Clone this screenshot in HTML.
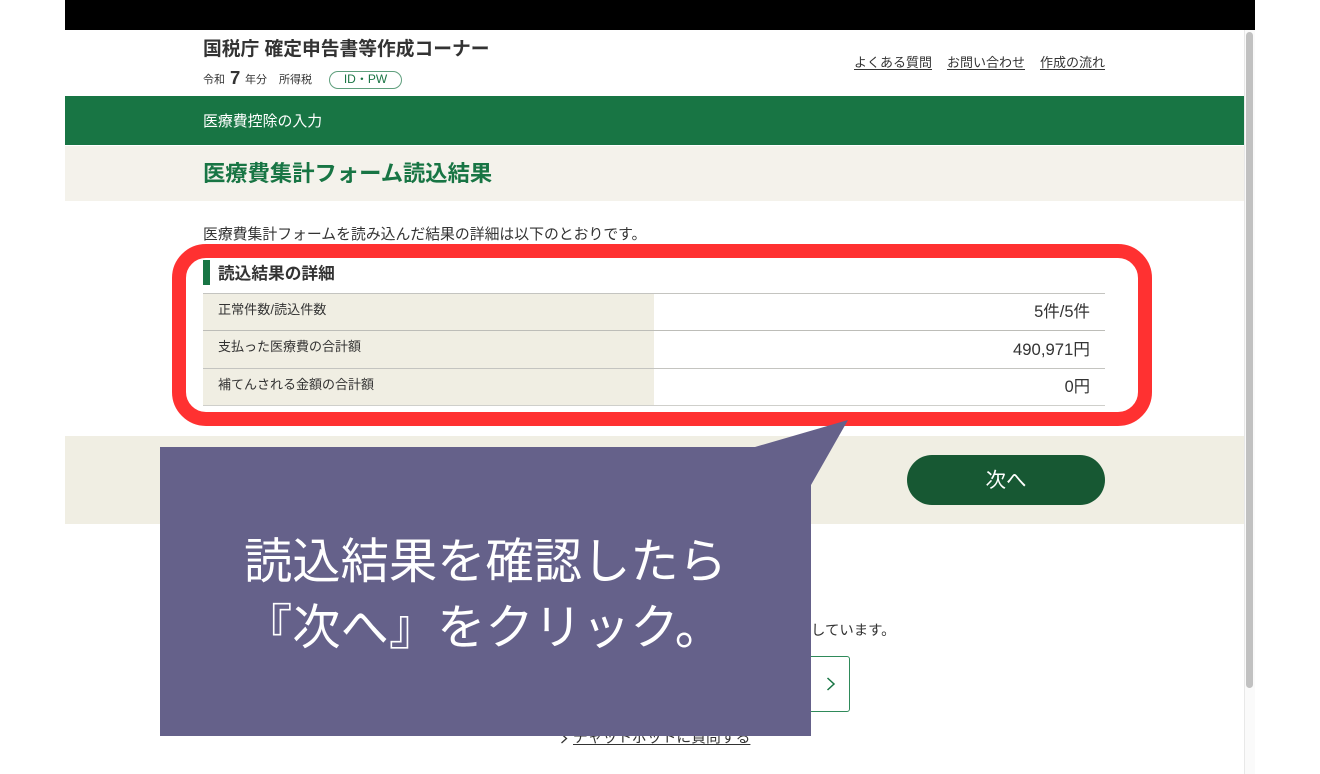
<!DOCTYPE html>
<html lang="ja">
<head>
<meta charset="utf-8">
<title>医療費集計フォーム読込結果</title>
<style>
html,body{margin:0;padding:0;background:#fff;}
body{width:1320px;height:774px;overflow:hidden;position:relative;font-family:"Liberation Sans","Noto Sans CJK JP",sans-serif;color:#333;}
.a{position:absolute;white-space:nowrap;}
u{text-underline-offset:2px;}
</style>
</head>
<body>
<div class="a" style="left:65px;top:0;width:1190px;height:30px;background:#000;"></div>
<div class="a" style="left:1244px;top:30px;width:11px;height:744px;background:#fafafa;border-left:1px solid #e8e8e8;box-sizing:border-box;"></div>
<div class="a" style="left:1246px;top:32px;width:7px;height:656px;background:#c1c1c1;border-radius:4px;"></div>

<div class="a" style="left:203px;top:37px;font-size:18.75px;line-height:24px;font-weight:700;">国税庁 確定申告書等作成コーナー</div>
<div class="a" style="left:203px;top:72px;font-size:11px;line-height:16px;">令和</div>
<div class="a" style="left:230px;top:67px;font-size:18.5px;line-height:22px;font-weight:700;">7</div>
<div class="a" style="left:245px;top:72px;font-size:11px;line-height:16px;">年分</div>
<div class="a" style="left:279px;top:72px;font-size:11px;line-height:16px;">所得税</div>
<div class="a" style="left:329px;top:71px;width:73px;height:18px;box-sizing:border-box;border:1px solid #5f9f7d;border-radius:9px;color:#1a7544;font-size:12px;line-height:15px;text-align:center;">ID・PW</div>
<div class="a" style="left:854px;top:54px;font-size:13px;line-height:18px;"><u>よくある質問</u></div>
<div class="a" style="left:947px;top:54px;font-size:13px;line-height:18px;"><u>お問い合わせ</u></div>
<div class="a" style="left:1040px;top:54px;font-size:13px;line-height:18px;"><u>作成の流れ</u></div>

<div class="a" style="left:65px;top:96px;width:1179px;height:49px;background:#187544;"></div>
<div class="a" style="left:203px;top:112px;font-size:14.9px;line-height:21px;color:#fff;">医療費控除の入力</div>
<div class="a" style="left:65px;top:146px;width:1179px;height:55px;background:#f4f2eb;"></div>
<div class="a" style="left:203px;top:158px;font-size:22.3px;line-height:32px;font-weight:700;color:#187544;">医療費集計フォーム読込結果</div>

<div class="a" style="left:203px;top:224px;font-size:14.85px;line-height:22px;">医療費集計フォームを読み込んだ結果の詳細は以下のとおりです。</div>

<div class="a" style="left:203px;top:260px;width:7px;height:25px;background:#187544;"></div>
<div class="a" style="left:218px;top:262px;font-size:16.7px;line-height:24px;font-weight:700;">読込結果の詳細</div>

<div class="a" style="left:203px;top:293px;width:451px;height:113px;background:#f0eee3;"></div>
<div class="a" style="left:203px;top:293px;width:902px;height:1px;background:#c4c4c0;"></div>
<div class="a" style="left:203px;top:330px;width:902px;height:1px;background:#bdbdb8;"></div>
<div class="a" style="left:203px;top:368px;width:902px;height:1px;background:#c4c4c0;"></div>
<div class="a" style="left:203px;top:405px;width:902px;height:1px;background:#cfcfcb;"></div>
<div class="a" style="left:218px;top:300px;font-size:13.1px;line-height:20px;">正常件数/読込件数</div>
<div class="a" style="left:218px;top:337px;font-size:13px;line-height:20px;">支払った医療費の合計額</div>
<div class="a" style="left:218px;top:375px;font-size:13px;line-height:20px;">補てんされる金額の合計額</div>
<div class="a" style="right:230px;top:301px;font-size:16.5px;line-height:22px;">5件/5件</div>
<div class="a" style="right:230px;top:339px;font-size:16.7px;line-height:22px;">490,971円</div>
<div class="a" style="right:230px;top:376px;font-size:16.3px;line-height:22px;">0円</div>

<div class="a" style="left:172px;top:244px;width:980px;height:182px;box-sizing:border-box;border:14px solid #ff3131;border-radius:34px;"></div>

<div class="a" style="left:65px;top:436px;width:1179px;height:88px;background:#f0eee3;"></div>
<div class="a" style="left:907px;top:455px;width:198px;height:50px;border-radius:25px;background:#175833;color:#fff;font-size:20.5px;line-height:51px;text-align:center;">次へ</div>

<div class="a" style="left:811px;top:620px;font-size:14.4px;line-height:22px;">しています。</div>
<div class="a" style="left:700px;top:656px;width:150px;height:56px;box-sizing:border-box;border:1.5px solid #2f8a5a;border-radius:3px;"></div>
<svg class="a" style="left:826px;top:677px;" width="11" height="14" viewBox="0 0 11 14"><path d="M1.5 1L8 7L1.5 13" fill="none" stroke="#187544" stroke-width="1.5"/></svg>
<svg class="a" style="left:560px;top:733px;" width="9" height="12" viewBox="0 0 9 12"><path d="M1.5 1L6.5 5.5L1.5 10" fill="none" stroke="#333" stroke-width="1.3"/></svg>
<div class="a" style="left:573px;top:728px;font-size:14.8px;line-height:20px;"><u>チャットボットに質問する</u></div>

<svg class="a" style="left:160px;top:420px;" width="700" height="320" viewBox="0 0 700 320"><path d="M0 27H595L688 0L651 65V316H0Z" fill="#65618a"/></svg>
<div class="a" style="left:160px;top:529px;width:651px;text-align:center;color:#fff;font-size:48.3px;line-height:66px;">読込結果を確認したら<br><span style="position:relative;left:-2px;">『次へ』をクリック。</span></div>
</body>
</html>
